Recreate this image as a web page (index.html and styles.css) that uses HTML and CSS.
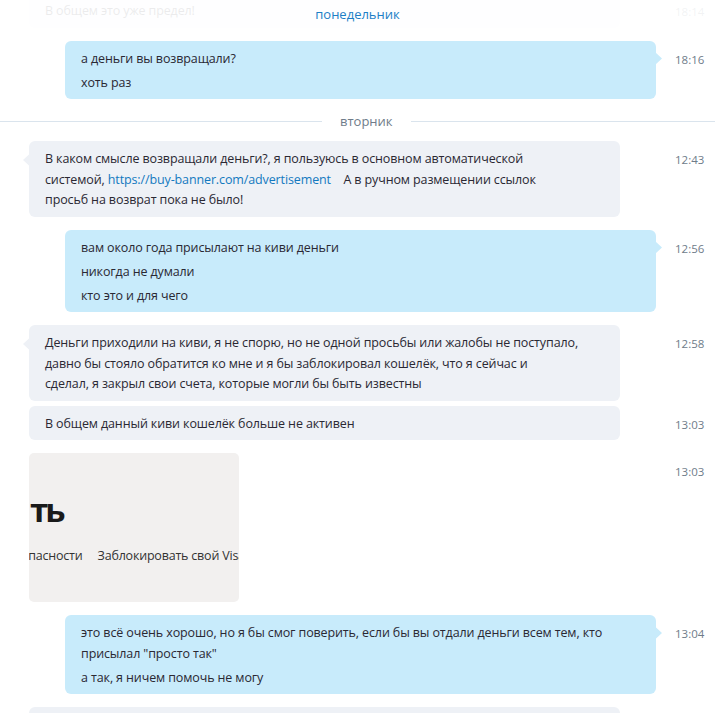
FILE: index.html
```html
<!DOCTYPE html>
<html lang="ru">
<head>
<meta charset="utf-8">
<title>Chat</title>
<link rel="stylesheet" href="styles.css">
</head>
<body>
<div class="chat">
  <div class="sticky-date"><span>понедельник</span></div>

  <div class="row in faded">
    <div class="area"><div class="bubble"><p>В общем это уже предел!</p></div></div>
    <div class="time">18:14</div>
  </div>

  <div class="row out">
    <div class="area"><div class="bubble tail">
      <p>а деньги вы возвращали?</p>
      <p>хоть раз</p>
    </div></div>
    <div class="time">18:16</div>
  </div>

  <div class="divider"><span class="line"></span><span class="label">вторник</span><span class="line"></span></div>

  <div class="row in">
    <div class="area"><div class="bubble tail">
      <p>В каком смысле возвращали деньги?, я пользуюсь в основном автоматической<br>системой, <a href="#">https://buy-banner.com/advertisement</a> &nbsp;&nbsp; А в ручном размещении ссылок<br>просьб на возврат пока не было!</p>
    </div></div>
    <div class="time">12:43</div>
  </div>

  <div class="row out">
    <div class="area"><div class="bubble tail">
      <p>вам около года присылают на киви деньги</p>
      <p>никогда не думали</p>
      <p>кто это и для чего</p>
    </div></div>
    <div class="time">12:56</div>
  </div>

  <div class="row in">
    <div class="area"><div class="bubble tail">
      <p>Деньги приходили на киви, я не спорю, но не одной просьбы или жалобы не поступало,<br>давно бы стояло обратится ко мне и я бы заблокировал кошелёк, что я сейчас и<br>сделал, я закрыл свои счета, которые могли бы быть известны</p>
    </div></div>
    <div class="time">12:58</div>
  </div>

  <div class="row in cont">
    <div class="area"><div class="bubble">
      <p>В общем данный киви кошелёк больше не активен</p>
    </div></div>
    <div class="time">13:03</div>
  </div>

  <div class="row in">
    <div class="area"><div class="shot">
      <div class="shot-title">ть</div>
      <div class="shot-links"><span class="cut">безопасности</span><span>Заблокировать свой Visa</span></div>
    </div></div>
    <div class="time">13:03</div>
  </div>

  <div class="row out">
    <div class="area"><div class="bubble tail">
      <p>это всё очень хорошо, но я бы смог поверить, если бы вы отдали деньги всем тем, кто<br>присылал "просто так"</p>
      <p>а так, я ничем помочь не могу</p>
    </div></div>
    <div class="time">13:04</div>
  </div>

  <div class="row in">
    <div class="area"><div class="bubble">
      <p>&nbsp;</p>
    </div></div>
    <div class="time"></div>
  </div>
</div>
</body>
</html>
```

FILE: styles.css
```css
* { box-sizing: border-box; }
html, body { margin: 0; padding: 0; background: #fff; }
body {
  font-family: "Open Sans", "Noto Sans", "DejaVu Sans", sans-serif;
  font-size: 12.5px;
  letter-spacing: -0.12px;
  color: #2a2833;
  width: 715px;
  height: 713px;
  overflow: hidden;
}
.chat {
  position: relative;
  display: flex;
  flex-direction: column;
  gap: 13px;
}
.sticky-date {
  position: absolute;
  top: 0;
  left: 0;
  right: 0;
  height: 30px;
  background: rgba(255, 255, 255, 0.91);
  display: flex;
  justify-content: center;
  padding-top: 4px;
  z-index: 2;
}
.sticky-date span { color: #1d7fc6; line-height: 20px; font-size: 13px; letter-spacing: 0; }

.row { display: flex; align-items: flex-start; }
.row.cont { margin-top: -8px; }
.row.faded { margin-top: -7px; }
.area { width: 656px; flex: none; }
.row.in .area { padding-left: 29px; padding-right: 36px; }
.row.out .area { padding-left: 65px; }

.bubble {
  position: relative;
  border-radius: 6px;
  padding: 8px 16px 6px;
  line-height: 20.5px;
}
.bubble p { margin: 0; white-space: nowrap; }
.bubble p + p { margin-top: 3.5px; }
.row.in .bubble { background: #eef1f6; }
.row.out .bubble { background: #c8ebfb; }
.bubble a { color: #1379c0; text-decoration: none; }

.bubble.tail::after {
  content: "";
  position: absolute;
  top: 11px;
  width: 7px;
  height: 14px;
}
.row.out .bubble.tail::after {
  right: -6px;
  background: #c8ebfb;
  clip-path: polygon(0 0, 15% 10%, 100% 50%, 15% 90%, 0 100%);
}
.row.in .bubble.tail::after {
  left: -6px;
  top: 12px;
  background: #eef1f6;
  clip-path: polygon(100% 0, 85% 10%, 0 50%, 85% 90%, 100% 100%);
}

.time {
  margin-left: 19px;
  padding-top: 9px;
  font-size: 11.5px;
  letter-spacing: 0;
  line-height: 20px;
  color: #6f7c8a;
}

.divider {
  display: flex;
  align-items: center;
  margin: -1px 0 -3px;
  height: 20px;
}
.divider .line { height: 1px; background: #dae4ed; }
.divider .line:first-child { width: 322px; }
.divider .line:last-child { flex: 1; }
.divider .label { color: #6f7c8a; padding: 0 18px; line-height: 20px; font-size: 13px; letter-spacing: 0; }

.shot {
  width: 210px;
  height: 149px;
  background: #f2f0ef;
  border-radius: 5px;
  overflow: hidden;
  display: flex;
  flex-direction: column;
  font-family: "Open Sans", "Noto Sans", sans-serif;
  color: #1a1a1a;
  letter-spacing: 0;
}
.shot-title {
  margin-top: 34px;
  margin-left: 1px;
  font-size: 33px;
  font-weight: 700;
  line-height: 46px;
  letter-spacing: -3px;
}
.shot-links {
  margin-top: 14px;
  white-space: nowrap;
  font-size: 12.5px;
  color: #333;
  display: flex;
  gap: 15px;
  letter-spacing: -0.2px;
}
.shot-links .cut { margin-left: -28px; }
```
